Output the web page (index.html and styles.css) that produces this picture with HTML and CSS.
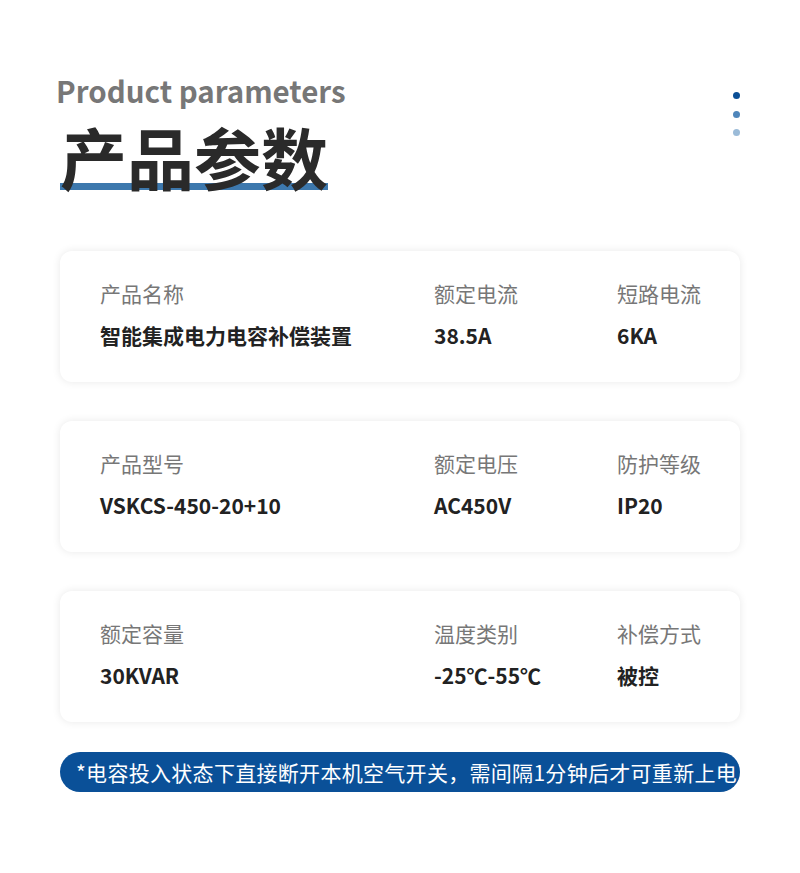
FILE: index.html
```html
<!doctype html>
<html>
  <head>
    <meta charset="UTF-8" />
    <title>产品参数</title>
    <link rel="stylesheet" href="styles.css">
  </head>
  <body>
    <div class="page">
      <div class="header">
        <div class="title-box">
          <div class="title-en">Product parameters</div>
          <div class="title-cn">产品参数</div>
        </div>
        <ul class="dots">
          <li class="dot1"></li>
          <li class="dot2"></li>
          <li class="dot3"></li>
        </ul>
      </div>

      <div class="card">
        <div class="cell">
          <div class="label">产品名称</div>
          <div class="value">智能集成电力电容补偿装置</div>
        </div>
        <div class="cell">
          <div class="label">额定电流</div>
          <div class="value">38.5A</div>
        </div>
        <div class="cell">
          <div class="label">短路电流</div>
          <div class="value">6KA</div>
        </div>
      </div>

      <div class="card">
        <div class="cell">
          <div class="label">产品型号</div>
          <div class="value">VSKCS-450-20+10</div>
        </div>
        <div class="cell">
          <div class="label">额定电压</div>
          <div class="value">AC450V</div>
        </div>
        <div class="cell">
          <div class="label">防护等级</div>
          <div class="value">IP20</div>
        </div>
      </div>

      <div class="card">
        <div class="cell">
          <div class="label">额定容量</div>
          <div class="value">30KVAR</div>
        </div>
        <div class="cell">
          <div class="label">温度类别</div>
          <div class="value">-25℃-55℃</div>
        </div>
        <div class="cell">
          <div class="label">补偿方式</div>
          <div class="value">被控</div>
        </div>
      </div>

      <div class="notice">*电容投入状态下直接断开本机空气开关，需间隔1分钟后才可重新上电</div>
    </div>
  </body>
</html>
```

FILE: styles.css
```css
* {
  padding: 0px;
  margin: 0px;
}
body {
  background: #fff;
  font-family: "Noto Sans CJK SC", "Noto Sans", sans-serif;
}
.page {
  width: 800px;
  height: 873px;
  padding: 0 60px;
  box-sizing: border-box;
}
.header {
  display: flex;
  justify-content: space-between;
  padding-top: 73px;
  margin-bottom: 56px;
}
.title-en {
  font-size: 29.5px;
  line-height: 34px;
  font-weight: 700;
  color: #777;
  margin-left: -4px;
}
.title-cn {
  display: inline-block;
  font-size: 67px;
  line-height: 70px;
  font-weight: 700;
  color: #2a2a2a;
  margin-top: 14px;
  padding-bottom: 4px;
  background: linear-gradient(#3d78ad, #3d78ad) no-repeat left bottom 5px / 100% 7px;
}
.dots {
  list-style: none;
  display: flex;
  flex-direction: column;
  gap: 11.5px;
  padding-top: 19px;
}
.dots li {
  width: 7px;
  height: 7px;
  border-radius: 50%;
}
.dot1 {
  background: #0a4f96;
}
.dot2 {
  background: #4f86bb;
}
.dot3 {
  background: #9bbbd8;
}
.card {
  display: grid;
  grid-template-columns: 334px 183px 1fr;
  height: 131px;
  box-sizing: border-box;
  padding: 31px 0 0 40px;
  margin-bottom: 39px;
  border-radius: 12px;
  background: #fff;
  box-shadow: 0 0 8px rgba(0, 0, 0, 0.09);
}
.label {
  font-size: 21px;
  line-height: 22px;
  color: #777;
}
.value {
  font-size: 21px;
  line-height: 22px;
  font-weight: 700;
  color: #222;
  margin-top: 20px;
}
.notice {
  height: 40px;
  line-height: 40px;
  border-radius: 20px;
  background: #0a5098;
  color: #fff;
  font-size: 21px;
  letter-spacing: 0.3px;
  padding-left: 16px;
  margin-top: -9px;
}
```
